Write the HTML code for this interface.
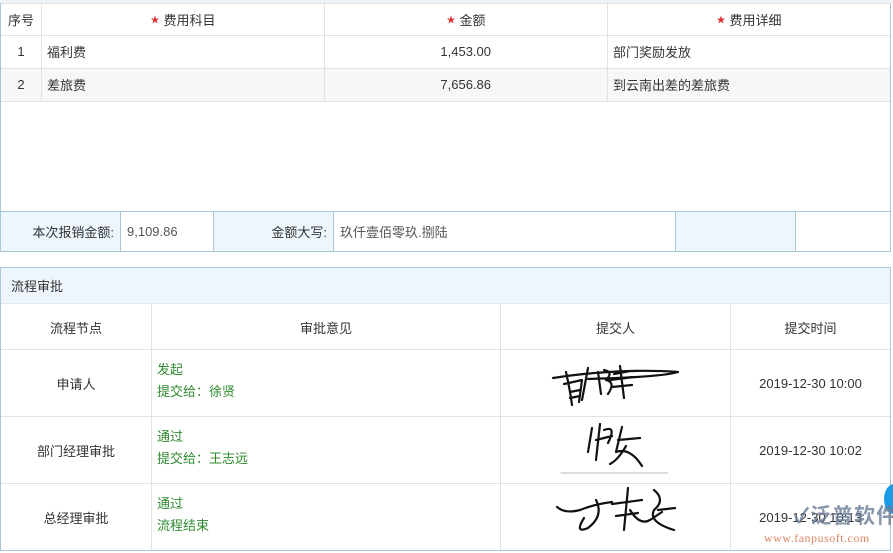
<!DOCTYPE html>
<html><head><meta charset="utf-8"><style>
*{box-sizing:border-box;margin:0;padding:0}
body{width:893px;height:553px;background:#fff;position:relative;overflow:hidden;font-family:"Liberation Sans","Noto Sans CJK SC",sans-serif;font-size:13px;color:#333}
.a{position:absolute;white-space:nowrap}
.c{position:absolute;display:flex;align-items:center;white-space:nowrap}
.s{color:#e03030;margin-right:4px;font-size:9px}
.g{color:#2e8b2e;line-height:22px}
</style></head><body>
<div class="a" style="left:0;top:0;width:891px;height:252px;border:1px solid #a9c6d6;border-top:none"></div>
<div class="a" style="left:0;top:0;width:893px;height:3px;background:#eef3f8"></div>
<div class="a" style="left:1px;top:3px;width:889px;height:1px;background:#e2e2e2"></div>
<div class="a" style="left:1px;top:35px;width:889px;height:1px;background:#e2e2e2"></div>
<div class="a" style="left:1px;top:68px;width:889px;height:33px;background:#f7f7f7"></div>
<div class="a" style="left:1px;top:68px;width:889px;height:1px;background:#e2e2e2"></div>
<div class="a" style="left:1px;top:101px;width:889px;height:1px;background:#e2e2e2"></div>
<div class="a" style="left:41px;top:3px;width:1px;height:99px;background:#e2e2e2"></div>
<div class="a" style="left:324px;top:3px;width:1px;height:99px;background:#e2e2e2"></div>
<div class="a" style="left:607px;top:3px;width:1px;height:99px;background:#e2e2e2"></div>
<div class="c" style="left:1px;top:3px;width:40px;height:32px;justify-content:center">序号</div>
<div class="c" style="left:42px;top:3px;width:282px;height:32px;justify-content:center"><span class="s">★</span>费用科目</div>
<div class="c" style="left:325px;top:3px;width:282px;height:32px;justify-content:center"><span class="s">★</span>金额</div>
<div class="c" style="left:608px;top:3px;width:282px;height:32px;justify-content:center"><span class="s">★</span>费用详细</div>
<div class="c" style="left:1px;top:35px;width:40px;height:33px;justify-content:center">1</div>
<div class="c" style="left:47px;top:35px;height:33px">福利费</div>
<div class="c" style="left:325px;top:35px;width:166px;height:33px;justify-content:flex-end">1,453.00</div>
<div class="c" style="left:613px;top:35px;height:33px">部门奖励发放</div>
<div class="c" style="left:1px;top:68px;width:40px;height:33px;justify-content:center">2</div>
<div class="c" style="left:47px;top:68px;height:33px">差旅费</div>
<div class="c" style="left:325px;top:68px;width:166px;height:33px;justify-content:flex-end">7,656.86</div>
<div class="c" style="left:613px;top:68px;height:33px">到云南出差的差旅费</div>
<div class="a" style="left:0;top:211px;width:891px;height:1px;background:#a9c6d6"></div>
<div class="c" style="left:1px;top:212px;width:119px;height:39px;background:#eef6fd;justify-content:flex-end;padding-right:6px">本次报销金额:</div>
<div class="a" style="left:120px;top:212px;width:1px;height:39px;background:#a9c6d6"></div>
<div class="c" style="left:127px;top:212px;height:39px;color:#555">9,109.86</div>
<div class="a" style="left:213px;top:212px;width:1px;height:39px;background:#a9c6d6"></div>
<div class="c" style="left:214px;top:212px;width:119px;height:39px;background:#eef6fd;justify-content:flex-end;padding-right:6px">金额大写:</div>
<div class="a" style="left:333px;top:212px;width:1px;height:39px;background:#a9c6d6"></div>
<div class="c" style="left:340px;top:212px;height:39px;color:#555">玖仟壹佰零玖.捌陆</div>
<div class="a" style="left:675px;top:212px;width:1px;height:39px;background:#a9c6d6"></div>
<div class="a" style="left:676px;top:212px;width:119px;height:39px;background:#eef6fd"></div>
<div class="a" style="left:795px;top:212px;width:1px;height:39px;background:#a9c6d6"></div>
<div class="a" style="left:0;top:267px;width:891px;height:284px;border:1px solid #a9c6d6"></div>
<div class="c" style="left:1px;top:268px;width:889px;height:36px;background:#eef5fd;padding-left:10px;border-bottom:1px solid #dfe6ec">流程审批</div>
<div class="a" style="left:1px;top:349px;width:889px;height:1px;background:#e2e2e2"></div>
<div class="a" style="left:1px;top:416px;width:889px;height:1px;background:#e2e2e2"></div>
<div class="a" style="left:1px;top:483px;width:889px;height:1px;background:#e2e2e2"></div>
<div class="a" style="left:151px;top:304px;width:1px;height:246px;background:#e2e2e2"></div>
<div class="a" style="left:500px;top:304px;width:1px;height:246px;background:#e2e2e2"></div>
<div class="a" style="left:730px;top:304px;width:1px;height:246px;background:#e2e2e2"></div>
<div class="c" style="left:1px;top:305px;width:150px;height:44px;justify-content:center">流程节点</div>
<div class="c" style="left:152px;top:305px;width:348px;height:44px;justify-content:center">审批意见</div>
<div class="c" style="left:501px;top:305px;width:229px;height:44px;justify-content:center">提交人</div>
<div class="c" style="left:731px;top:305px;width:159px;height:44px;justify-content:center">提交时间</div>
<div class="c" style="left:1px;top:350px;width:150px;height:66px;justify-content:center">申请人</div>
<div class="c" style="left:1px;top:417px;width:150px;height:66px;justify-content:center">部门经理审批</div>
<div class="c" style="left:1px;top:484px;width:150px;height:66px;justify-content:center">总经理审批</div>
<div class="a g" style="left:157px;top:359px">发起<br>提交给：徐贤</div>
<div class="a g" style="left:157px;top:426px">通过<br>提交给：王志远</div>
<div class="a g" style="left:157px;top:493px">通过<br>流程结束</div>
<div class="c" style="left:731px;top:350px;width:159px;height:66px;justify-content:center">2019-12-30 10:00</div>
<div class="c" style="left:731px;top:417px;width:159px;height:66px;justify-content:center">2019-12-30 10:02</div>
<div class="c" style="left:731px;top:484px;width:159px;height:66px;justify-content:center">2019-12-30 10:13</div>
<svg class="a" style="left:500px;top:350px" width="230" height="200" fill="none" stroke="#111" stroke-width="2.2" stroke-linecap="round" stroke-linejoin="round">
<path d="M53 28 C90 22 140 19 178 22 C165 26 125 28 88 29"/>
<path d="M66 22 Q70 40 72 55 M64 34 L82 30 L79 52 M70 42 L80 40 M88 18 L82 50 M70 48 L80 46"/>
<path d="M98 22 L101 44 M104 20 Q114 22 106 30 Q116 32 108 44 M120 16 L124 48 M110 30 L134 27 M114 24 L130 21 M112 37 L132 35"/>
<path d="M92 78 L88 102 M100 74 L96 110 M96 90 L112 86 M104 80 Q117 75 108 93 M122 77 L116 102 Q130 97 142 116 M118 90 L140 88 M126 96 Q118 110 110 114"/>
<path d="M61 123 L168 123" stroke="#bbb" stroke-width="1"/>
<path d="M57 157 Q65 164 80 160 Q95 154 112 152 M96 150 Q104 166 88 178 Q74 184 84 168 M128 138 L124 180 M112 154 L142 150 M116 166 L138 163 M130 160 Q140 176 150 170 M154 140 Q166 150 154 160 Q148 172 174 180 M158 160 L175 158 M150 170 L162 162"/>
</svg>
<div class="a" style="left:884px;top:484px;width:20px;height:30px;border-radius:50%;background:#1a9be6"></div>
<div class="a" style="left:794px;top:504px;font-size:21px;color:#6a7d95;opacity:.8;font-weight:bold;letter-spacing:1px;line-height:26px">✓泛普软件</div>
<div class="a" style="left:764px;top:531px;font-size:12px;color:#d9704a;opacity:.85;font-family:'Liberation Serif',serif;letter-spacing:.5px">www.fanpusoft.com</div>
</body></html>
